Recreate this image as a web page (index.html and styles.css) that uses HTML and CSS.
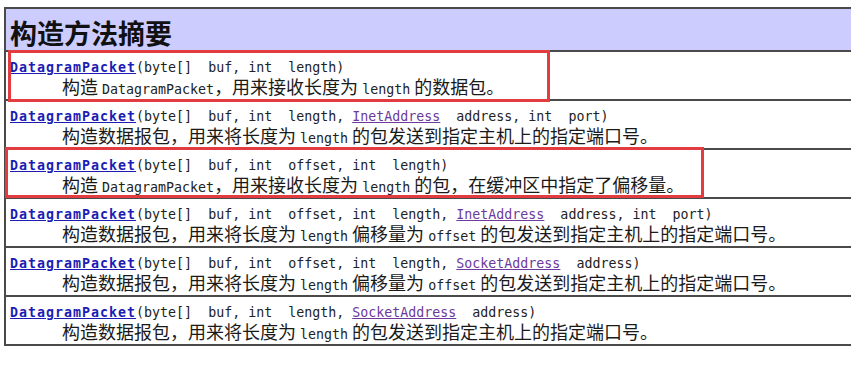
FILE: index.html
```html
<!DOCTYPE html>
<html lang="zh-CN">
<head>
<meta charset="utf-8">
<title>构造方法摘要</title>
<link rel="stylesheet" href="styles.css">
</head>
<body>
<div class="summary">
  <div class="head">构造方法摘要</div>
  <div class="row">
    <div class="sig"><a class="ctor" href="#">DatagramPacket</a><span class="code">(byte[]  buf, int  length)</span></div>
    <div class="desc">构造 <span class="mono">DatagramPacket</span>，用来接收长度为 <span class="mono">length</span> 的数据包。</div>
  </div>
  <div class="row">
    <div class="sig"><a class="ctor" href="#">DatagramPacket</a><span class="code">(byte[]  buf, int  length, </span><a class="type" href="#">InetAddress</a><span class="code">  address, int  port)</span></div>
    <div class="desc">构造数据报包，用来将长度为 <span class="mono">length</span> 的包发送到指定主机上的指定端口号。</div>
  </div>
  <div class="row">
    <div class="sig"><a class="ctor" href="#">DatagramPacket</a><span class="code">(byte[]  buf, int  offset, int  length)</span></div>
    <div class="desc">构造 <span class="mono">DatagramPacket</span>，用来接收长度为 <span class="mono">length</span> 的包，在缓冲区中指定了偏移量。</div>
  </div>
  <div class="row">
    <div class="sig"><a class="ctor" href="#">DatagramPacket</a><span class="code">(byte[]  buf, int  offset, int  length, </span><a class="type" href="#">InetAddress</a><span class="code">  address, int  port)</span></div>
    <div class="desc">构造数据报包，用来将长度为 <span class="mono">length</span> 偏移量为 <span class="mono">offset</span> 的包发送到指定主机上的指定端口号。</div>
  </div>
  <div class="row">
    <div class="sig"><a class="ctor" href="#">DatagramPacket</a><span class="code">(byte[]  buf, int  offset, int  length, </span><a class="type" href="#">SocketAddress</a><span class="code">  address)</span></div>
    <div class="desc">构造数据报包，用来将长度为 <span class="mono">length</span> 偏移量为 <span class="mono">offset</span> 的包发送到指定主机上的指定端口号。</div>
  </div>
  <div class="row">
    <div class="sig"><a class="ctor" href="#">DatagramPacket</a><span class="code">(byte[]  buf, int  length, </span><a class="type" href="#">SocketAddress</a><span class="code">  address)</span></div>
    <div class="desc">构造数据报包，用来将长度为 <span class="mono">length</span> 的包发送到指定主机上的指定端口号。</div>
  </div>
</div>
<div class="mark mark-one"></div>
<div class="mark mark-two"></div>
</body>
</html>
```

FILE: styles.css
```css
html, body {
  margin: 0;
  padding: 0;
  background: #ffffff;
  overflow: hidden;
}

body {
  position: relative;
  width: 851px;
  height: 365px;
  font-family: "Noto Sans CJK SC", "Noto Sans", sans-serif;
  color: #1a1a1a;
}

.summary {
  margin: 7px 0 0 4px;
  width: 900px;
  border-top: 2px solid #4a4a4a;
  border-left: 2px solid #4a4a4a;
  border-bottom: 2px solid #4a4a4a;
}

.head {
  background: #ccccff;
  height: 41px;
  box-sizing: border-box;
  padding: 6px 0 0 4px;
  line-height: 35px;
  font-size: 27px;
  font-weight: bold;
  color: #111111;
}

.row {
  border-top: 2px solid #4a4a4a;
  padding: 3px 0 2px 4px;
}

.sig,
.desc {
  height: 21px;
  line-height: 21px;
  white-space: pre;
}

.code,
.mono,
.type {
  font-family: "DejaVu Sans Mono", "Liberation Mono", monospace;
  font-size: 13.3px;
  color: #222222;
}

.ctor {
  font-family: "DejaVu Sans Mono", "Liberation Mono", monospace;
  font-size: 13.3px;
  font-weight: bold;
  letter-spacing: 1px;
  color: #1c1cb4;
  text-decoration: underline;
}

.type {
  color: #6b3a9c;
  text-decoration: underline;
}

.desc {
  padding-left: 52px;
  font-size: 18px;
}

.mark {
  position: absolute;
  box-sizing: border-box;
  border: 3px solid #e23c40;
}

.mark-one {
  left: 8px;
  top: 50px;
  width: 542px;
  height: 52px;
}

.mark-two {
  left: 5px;
  top: 147px;
  width: 699px;
  height: 51px;
}
```
